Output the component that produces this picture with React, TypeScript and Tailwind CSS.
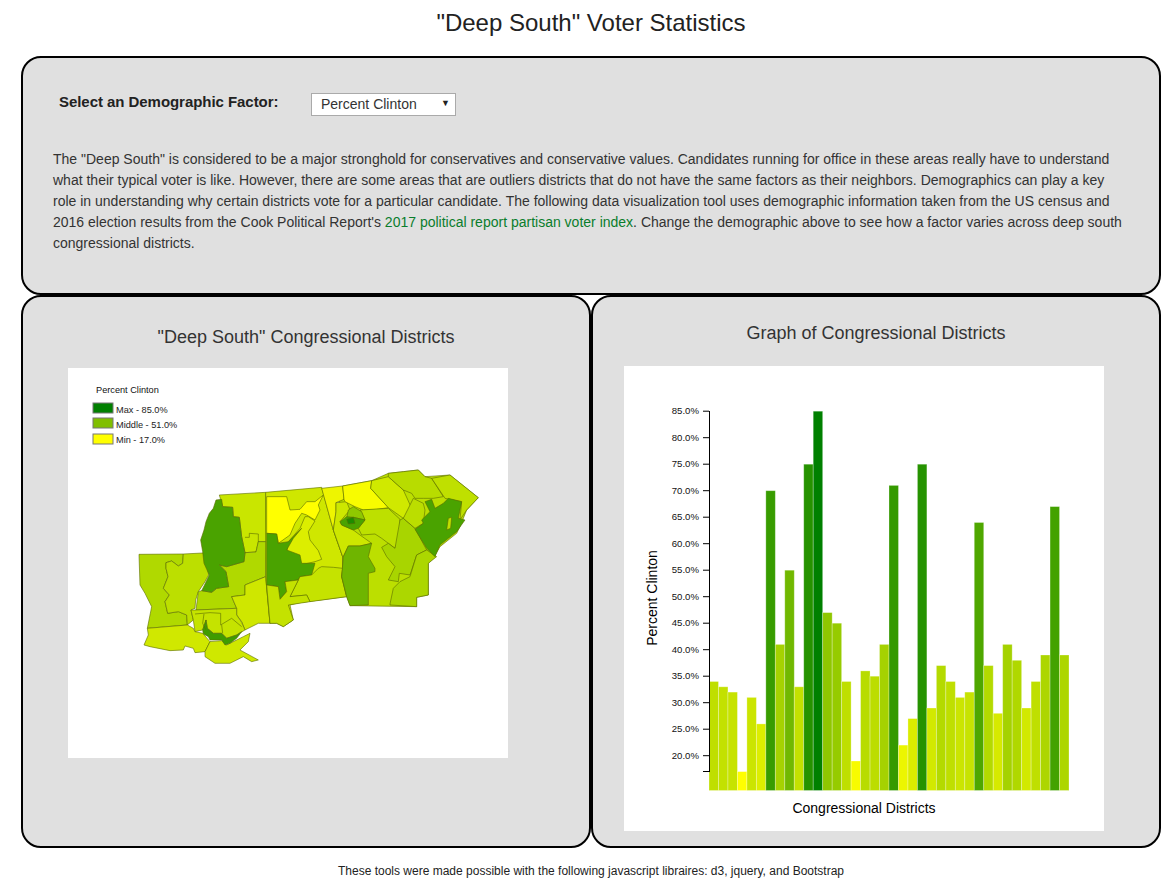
import React from 'react';

const FONT = { fontFamily: '"Liberation Sans", Arial, sans-serif' };

const values = [
  34, 33, 32, 17, 31, 26, 70, 41, 55, 33, 75, 85, 47, 45, 34, 19, 36, 35, 41, 71, 22, 27, 75, 29, 37, 34, 31, 32, 64,
  37, 28, 41, 38, 29, 34, 39, 67, 39,
];
const ticks = [85, 80, 75, 70, 65, 60, 55, 50, 45, 40, 35, 30, 25, 20];

const scaleY = (v: number) => 411.2 + (85 - v) * 5.3;

// yellow -> green, same scale as the legend
const colorFor = (v: number) => {
  const t = (v - 17) / 68;
  const r = Math.round(255 * (1 - t));
  const g = Math.round(255 - 127 * t);
  return `rgb(${r},${g},0)`;
};

// west half, coordinates are 3x screen px from (130,460)
const westDistricts: [string, string][] = [
  ['#b0d900', '27,283 160,282 158,310 145,318 125,303 108,308 108,325 114,350 100,385 118,405 105,425 113,460 145,455 170,465 172,495 52,505 65,440 45,400 30,375'],
  ['#bcdf00', '160,282 220,279 225,300 232,320 236,345 225,365 205,395 197,420 195,445 183,450 190,480 172,495 170,465 145,455 113,460 105,425 118,405 100,385 114,350 108,325 108,308 125,303 145,318 158,310'],
  ['#c9e600', '268,105 407,97 409,245 385,245 378,276 345,278 335,230 328,172 310,170 308,142 278,140'],
  ['#b0d900', '409,245 407,350 345,375 345,405 305,410 320,445 198,450 205,395 215,392 245,397 260,385 296,380 288,335 268,315 290,320 342,305 345,278 378,276 385,245'],
  ['#4aa300', '258,120 275,118 278,140 308,142 310,170 328,172 335,230 345,278 342,305 290,320 268,315 288,335 296,380 260,385 245,397 215,392 225,372 238,345 222,310 218,275 212,240 222,210 228,185 238,160 250,145'],
  ['#cfe700', '407,350 420,490 385,490 345,510 335,485 320,465 320,445 305,410 345,405 345,375'],
  ['#d0e800', '52,505 172,495 190,505 195,515 218,520 240,545 225,575 195,578 190,565 165,558 160,570 120,572 60,560 42,555 55,525'],
  ['#c5e300', '183,450 198,450 320,445 320,465 335,487 345,510 320,525 290,535 275,520 250,520 232,505 228,480 218,510 195,515 190,480'],
  ['#cfe800', '225,575 240,545 275,542 290,555 340,530 360,520 355,545 330,570 385,600 365,605 340,590 300,610 255,610 225,590'],
  ['#3f9c00', '218,510 228,480 232,505 250,520 275,520 290,535 320,525 335,515 320,535 300,550 285,555 275,540 240,540 235,530 220,522'],
];

const westLines = [
  '345,232 358,232 358,220 385,222 385,245',
  '195,462 240,458 272,460 272,495 305,475 335,500',
  '222,462 218,490 228,510',
  '275,495 278,520',
];

// east half, coordinates are 3x screen px from (300,460)
const eastDistricts: [string, string][] = [
  ['#cfe700', '-103,97 65,82 100,210 128,290 128,325 125,350 140,410 0,428 -30,435 -20,480 -50,500 -70,490 -90,490 -103,350'],
  ['#ffff00', '-100,110 -40,110 -30,150 0,148 20,125 45,125 70,105 55,135 60,150 45,180 20,165 5,160 -15,190 -30,225 -65,250 -70,222 -100,220'],
  ['#dcee00', '25,170 45,183 25,215 30,240 55,272 65,298 45,305 0,315 -35,312 -40,280 -35,245 0,205 15,170'],
  ['#4aa300', '-100,220 -70,222 -65,250 -35,245 5,205 -20,235 -40,270 0,285 5,310 45,310 35,345 0,350 -5,360 -45,365 -40,395 -60,418 -65,380 -100,375'],
  ['#c5e300', '-5,360 -30,410 20,405 30,425 140,410 125,350 128,325 100,322 65,320 55,325 35,345 0,350'],
  ['#c4e200', '-100,375 -65,380 -60,418 -40,395 -45,365 -5,360 -30,410 20,405 30,425 -35,435 -20,480 -50,500 -70,490 -90,490'],
  ['#bcdf00', '128,78 215,62 265,40 310,35 355,30 375,50 450,45 535,113 500,150 480,200 470,220 420,260 400,295 385,310 385,405 350,412 350,440 150,437 140,410 125,350 128,325 128,290 100,210'],
  ['#eef500', '65,85 128,78 132,118 108,128 108,155 100,210'],
  ['#cde700', '108,128 140,125 150,150 120,185 125,195 160,210 180,225 215,250 180,258 145,258 130,290 128,290 100,210 108,155'],
  ['#f8fc00', '128,78 215,62 212,85 265,143 230,148 190,150 165,140 135,125 132,118'],
  ['#d0e900', '215,62 265,50 310,90 335,145 310,175 265,143 212,85'],
  ['#bde000', '180,150 265,145 300,178 300,225 285,265 265,250 245,235 225,222 185,225 175,205 195,180'],
  ['#8fc800', '145,150 160,140 185,155 195,180 160,172 140,175'],
  ['#4aa300', '120,185 140,170 160,172 195,180 175,205 160,210 125,195'],
  ['#1e8d00', '140,178 160,172 165,190 145,192'],
  ['#6fb500', '145,258 180,258 215,250 205,290 225,325 225,335 205,340 205,435 150,437 140,410 125,350 130,290'],
  ['#a8d500', '245,262 265,250 285,265 300,180 310,175 345,205 380,270 350,285 330,345 298,340 295,365 265,360 285,320 260,290'],
  ['#acd700', '270,432 280,385 300,365 330,350 350,285 380,270 410,290 385,310 385,405 350,412 350,440 270,435'],
  ['#bbde00', '310,175 340,115 370,130 375,150 370,190 345,205'],
  ['#b8dc00', '265,50 265,40 310,35 355,30 375,50 395,55 430,110 400,115 370,115 345,115 335,100 310,90'],
  ['#bfe000', '395,55 450,45 535,113 500,150 480,180 485,125 435,115'],
  ['#4aa300', '375,125 395,118 405,145 430,130 445,115 485,125 475,175 495,180 470,215 445,235 420,255 405,290 380,265 345,208 370,190 365,180 390,155'],
  ['#bfe000', '445,175 455,172 452,205 440,210'],
];

function DistrictMap() {
  return (
    <svg viewBox="68 368 440 390" className="block h-[390px] w-[440px] bg-white">
      <text x={96} y={393} fontSize={9.2} fill="#111">
        Percent Clinton
      </text>
      <rect x={93} y={403} width={20} height={10} fill="#008000" stroke="#777" />
      <text x={116} y={413} fontSize={9.2} fill="#222">
        Max - 85.0%
      </text>
      <rect x={93} y={418} width={20} height={10} fill="#80bf00" stroke="#777" />
      <text x={116} y={428} fontSize={9.2} fill="#222">
        Middle - 51.0%
      </text>
      <rect x={93} y={434} width={20} height={10} fill="#ffff00" stroke="#777" />
      <text x={116} y={443} fontSize={9.2} fill="#222">
        Min - 17.0%
      </text>
      <g transform="translate(130 460) scale(0.3333)" stroke="#5a6c00" strokeWidth={1.8} strokeLinejoin="round">
        {westDistricts.map(([fill, points], i) => (
          <polygon key={i} fill={fill} points={points} />
        ))}
        {westLines.map((points, i) => (
          <polyline key={i} fill="none" points={points} />
        ))}
      </g>
      <g transform="translate(300 460) scale(0.3333)" stroke="#5a6c00" strokeWidth={1.8} strokeLinejoin="round">
        {eastDistricts.map(([fill, points], i) => (
          <polygon key={i} fill={fill} points={points} />
        ))}
      </g>
    </svg>
  );
}

function DistrictChart() {
  const barWidth = 360 / values.length;
  return (
    <svg viewBox="624 366 480 465" className="block h-[465px] w-[480px] bg-white">
      {values.map((v, i) => (
        <rect
          key={i}
          x={709 + i * barWidth}
          y={scaleY(v)}
          width={barWidth}
          height={790.5 - scaleY(v)}
          fill={colorFor(v)}
          stroke="#ffffff"
          strokeOpacity={0.35}
          strokeWidth={0.8}
        />
      ))}
      <line x1={709.5} x2={709.5} y1={411} y2={772} stroke="#000" strokeWidth={1} />
      <line x1={703} x2={709} y1={771.5} y2={771.5} stroke="#000" strokeWidth={1} />
      {ticks.map((t) => (
        <g key={t}>
          <line x1={703} x2={709} y1={scaleY(t)} y2={scaleY(t)} stroke="#000" strokeWidth={1} />
          <text x={699} y={scaleY(t) + 3.2} fontSize={9.6} textAnchor="end" fill="#111">
            {t}.0%
          </text>
        </g>
      ))}
      <text x={864} y={813} fontSize={14} textAnchor="middle" fill="#000">
        Congressional Districts
      </text>
      <text transform="translate(657 598) rotate(-90)" fontSize={14} textAnchor="middle" fill="#000">
        Percent Clinton
      </text>
    </svg>
  );
}

export default function App() {
  return (
    <div className="w-[1174px] overflow-hidden text-[#333]" style={FONT}>
      <div className="w-[1182px]">
        <h1 className="pt-[9px] text-center text-[24px] leading-[28px] font-normal text-[#222]">
          "Deep South" Voter Statistics
        </h1>

        <div className="mx-[21px] mt-[19px]">
          {/* Intro */}
          <div className="h-[239px] rounded-[20px] border-2 border-black bg-[#e0e0e0] px-[30px] pt-[34px]">
            <div className="flex items-start pl-[6px]">
              <label className="w-[252px] text-[15px] leading-[20px] tracking-[-0.05px] font-bold text-[#222]">
                Select an Demographic Factor:
              </label>
              <div className="relative">
                <select
                  defaultValue="Percent Clinton"
                  className="h-[23px] w-[145px] appearance-none rounded-none border border-[#aaa] bg-white pl-[9px] text-[14px] text-[#333]"
                >
                  <option>Percent Clinton</option>
                </select>
                <span className="pointer-events-none absolute top-[5px] right-[6px] text-[9px] leading-[12px] text-[#222]">
                  ▼
                </span>
              </div>
            </div>
            <p className="mt-[33px] text-[14px] leading-[21px] text-[#333]">
              The "Deep South" is considered to be a major stronghold for conservatives and conservative values.
              Candidates running for office in these areas really have to understand what their typical voter is like.
              However, there are some areas that are outliers districts that do not have the same factors as their
              neighbors. Demographics can play a key role in understanding why certain districts vote for a particular
              candidate. The following data visualization tool uses demographic information taken from the US census and
              2016 election results from the Cook Political Report's{' '}
              <span className="text-[#0a7d2c]">2017 political report partisan voter index</span>. Change the demographic
              above to see how a factor varies across deep south congressional districts.
            </p>
          </div>

          {/* Map and chart */}
          <div className="flex">
            <div className="h-[553px] w-[570px] rounded-[20px] border-2 border-black bg-[#e0e0e0] pt-[28px] pl-[45px]">
              <h2 className="-ml-[45px] text-center text-[18px] leading-[24px] font-normal text-[#333]">
                "Deep South" Congressional Districts
              </h2>
              <div className="mt-[19px]">
                <DistrictMap />
              </div>
            </div>
            <div className="h-[553px] w-[570px] rounded-[20px] border-2 border-black bg-[#e0e0e0] pt-[24px] pl-[31px]">
              <h2 className="-ml-[31px] text-center text-[18px] leading-[24px] font-normal text-[#333]">
                Graph of Congressional Districts
              </h2>
              <div className="mt-[21px]">
                <DistrictChart />
              </div>
            </div>
          </div>
        </div>

        <p className="mt-[16px] text-center text-[12px] leading-[14px] text-[#222]">
          These tools were made possible with the following javascript libraires: d3, jquery, and Bootstrap
        </p>
      </div>
    </div>
  );
}
